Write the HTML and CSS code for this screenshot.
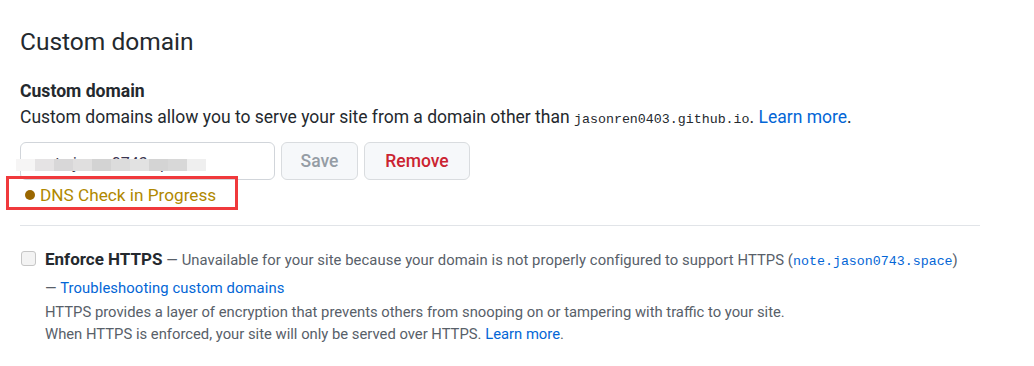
FILE: index.html
```html
<!DOCTYPE html>
<html>
<head>
<meta charset="utf-8">
<link rel="stylesheet" href="styles.css">
</head>
<body>
<div class="page">
  <h2 class="title">Custom domain</h2>
  <div class="field">
    <div class="label">Custom domain</div>
    <p class="desc">Custom domains allow you to serve your site from a domain other than <code class="mono">jasonren0403.github.io</code>. <a class="link" href="#">Learn more</a>.</p>
    <div class="form-row">
      <div class="input">
        <span class="input-text">note.jason0743.space</span>
        <span class="mosaic"><i class="m1"></i><i class="m2"></i><i class="m3"></i><i class="m4"></i><i class="m5"></i><i class="m6"></i><i class="m7"></i><i class="m8"></i><i class="m9"></i><i class="m10"></i></span>
      </div>
      <button class="btn btn-save">Save</button>
      <button class="btn btn-remove">Remove</button>
    </div>
    <div class="status-wrap">
      <div class="status"><span class="dot"></span>DNS Check in Progress</div>
      <span class="annot"></span>
    </div>
  </div>
  <hr class="divider">
  <div class="https">
    <span class="checkbox"></span>
    <div class="https-body">
      <div class="https-line1"><span class="https-label">Enforce HTTPS</span><span class="note note-1"> — Unavailable for your site because your domain is not properly configured to support HTTPS (<code class="mono mono-blue">note.jason0743.space</code>)</span></div>
      <div class="note line2">— <a class="link" href="#">Troubleshooting custom domains</a></div>
      <div class="note line3">HTTPS provides a layer of encryption that prevents others from snooping on or tampering with traffic to your site.</div>
      <div class="note line4">When HTTPS is enforced, your site will only be served over HTTPS. <a class="link" href="#">Learn more</a>.</div>
    </div>
  </div>
</div>
</body>
</html>
```
FILE: styles.css
```css
* { box-sizing: border-box; }
html, body { margin: 0; background: #fff; }
body {
  font-family: Roboto, "Noto Sans", sans-serif;
  color: #24292e;
  width: 1034px;
  height: 366px;
  overflow: hidden;
}
.page {
  padding: 27px 0 0 20px;
  width: 980px;
}
.title {
  margin: 0;
  font-size: 24.5px;
  font-weight: 400;
  line-height: 30px;
}
.field { margin-top: 21px; }
.label {
  font-size: 17.6px;
  font-weight: 700;
  line-height: 26px;
}
.desc {
  margin: 0;
  font-size: 17.5px;
  line-height: 26px;
  white-space: nowrap;
}
.mono {
  font-family: "Liberation Mono", "DejaVu Sans Mono", monospace;
  font-size: 13.3px;
}
.link { color: #0366d6; text-decoration: none; }
.form-row {
  display: flex;
  gap: 6px;
  margin-top: 9px;
  height: 38px;
}
.input {
  position: relative;
  width: 255px;
  height: 38px;
  border: 1px solid #d1d5da;
  border-radius: 6px;
  background: #fff;
  padding: 0 16px;
  display: flex;
  align-items: center;
  font-size: 16px;
}
.input-text { color: #3a3550; margin-top: 5px; }
.mosaic {
  position: absolute;
  left: -5px;
  top: 16px;
  height: 12px;
  display: flex;
}
.mosaic i { display: block; height: 12px; width: 19px; }
.mosaic .m1 { background: #f6f5f5; }
.mosaic .m2 { background: #e5e3e4; }
.mosaic .m3 { background: #d8d7d8; }
.mosaic .m4 { background: #e0dfdf; }
.mosaic .m5 { background: #d3d3d3; }
.mosaic .m6 { background: #dcdcdc; }
.mosaic .m7 { background: #e2e2e2; }
.mosaic .m8 { background: #d4d4d4; }
.mosaic .m9 { background: #d8d8d8; }
.mosaic .m10 { background: #efefef; }
.btn {
  height: 38px;
  border-radius: 6px;
  border: 1px solid #d9dcdf;
  background: #f6f8fa;
  font-family: inherit;
  font-size: 17.5px;
  font-weight: 500;
  padding: 0;
}
.btn-save { width: 77px; color: #959da5; }
.btn-remove { width: 106px; color: #cb2431; }
.status-wrap {
  position: relative;
  margin-top: 3px;
  width: 218px;
}
.status {
  display: flex;
  align-items: center;
  font-size: 17.2px;
  line-height: 24px;
  color: #b08800;
  padding-left: 5px;
}
.dot {
  width: 10px;
  height: 10px;
  border-radius: 50%;
  background: #9a6700;
  margin-right: 5px;
}
.annot {
  position: absolute;
  left: -14px;
  top: -7px;
  width: 232px;
  height: 34px;
  border: 3px solid #f0393c;
}
.divider {
  margin: 18px 0 0 0;
  border: 0;
  border-top: 1px solid #e1e4e8;
  width: 960px;
}
.https {
  display: flex;
  margin-top: 25px;
}
.checkbox {
  width: 15px;
  height: 15px;
  border: 1px solid #c6c6c6;
  border-radius: 3px;
  background: #f3f3f3;
  margin: 0 9px 0 1px;
  flex: none;
}
.https-body { margin-top: -6px; }
.https-line1 { line-height: 28px; white-space: nowrap; }
.https-label {
  font-size: 17px;
  font-weight: 700;
}
.note {
  font-size: 14.8px;
  color: #586069;
}
.note-1 { letter-spacing: 0.08px; }
.mono-blue { color: #0366d6; font-size: 13.3px; letter-spacing: 0; }
.line2 { line-height: 24px; letter-spacing: 0.1px; }
.line3 { line-height: 24px; }
.line4 { line-height: 21px; }
```
